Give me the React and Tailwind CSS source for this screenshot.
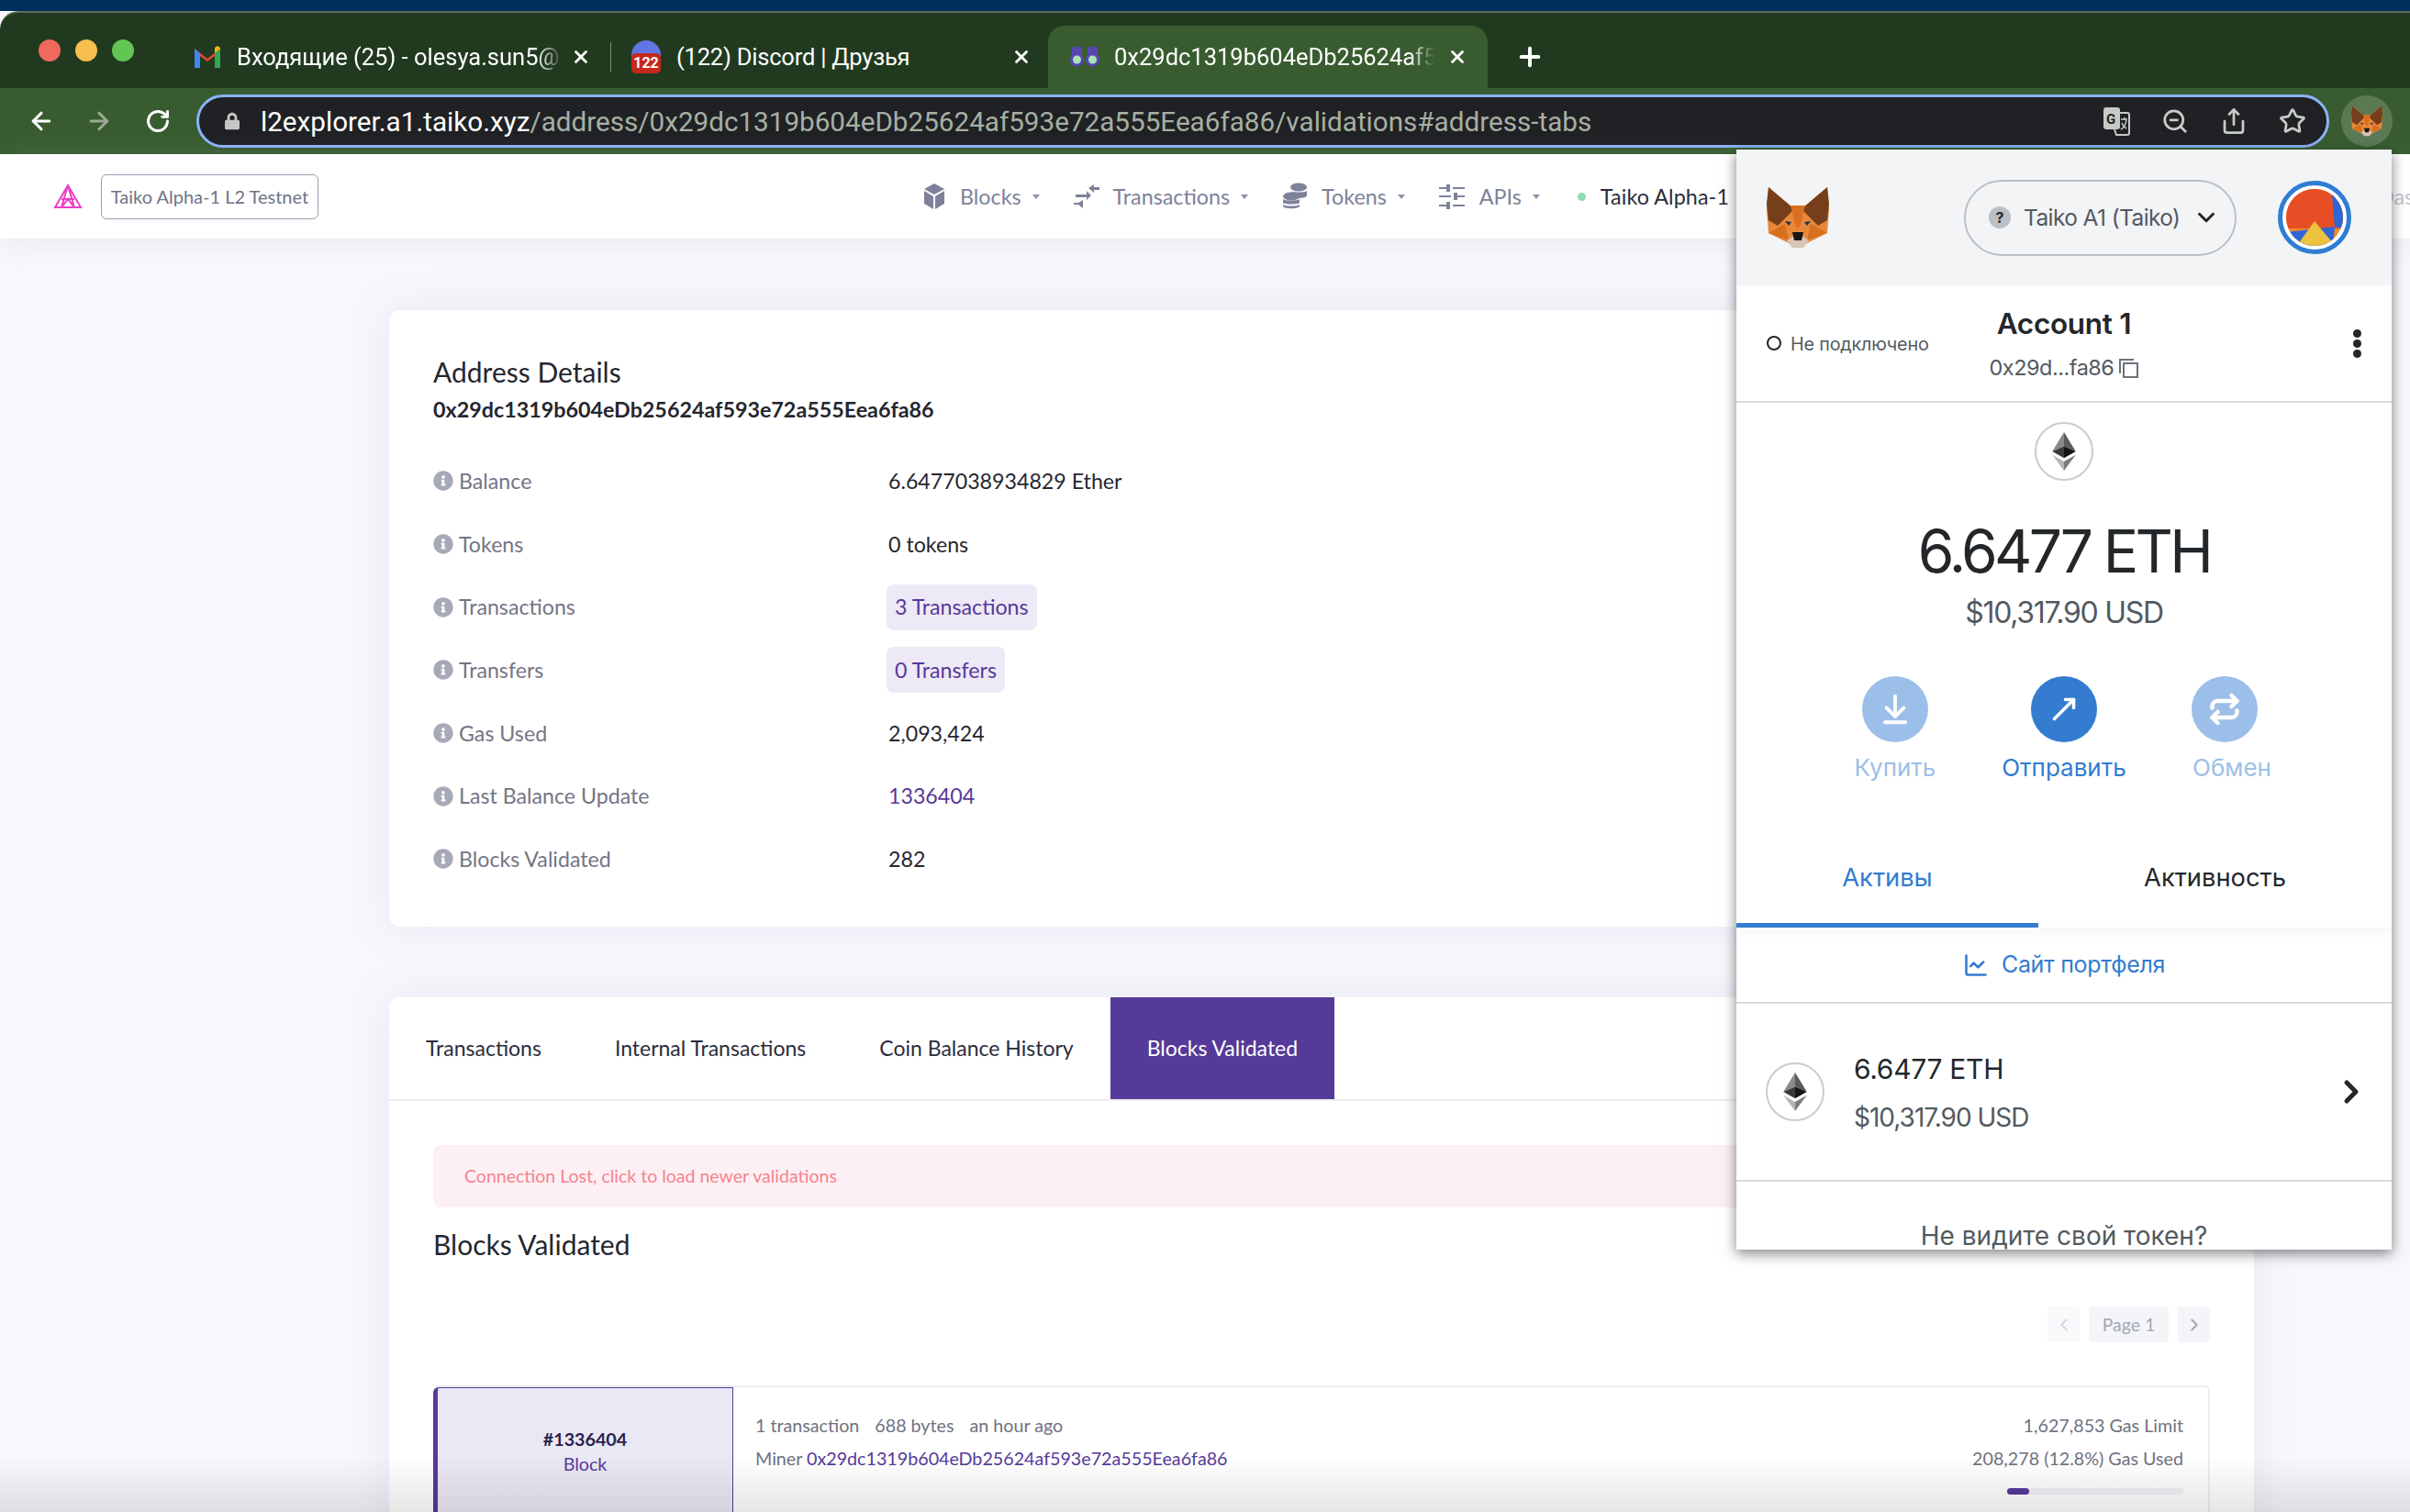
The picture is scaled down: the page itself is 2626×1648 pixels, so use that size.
import React from "react";
import { ArrowLeft, ArrowRight, RotateCw, X, Plus, ZoomOut, Share, Star, ChevronDown, ChevronRight, ChevronLeft, ArrowDownToLine, MoveUpRight, Repeat, ChartLine } from "lucide-react";
import { FaInfoCircle, FaLock } from "react-icons/fa";

const Fox = ({ className }) => (
  <svg viewBox="0 0 68 67" className={className}>
    <polygon points="2,0 26,20 42,20 66,0 68,24 66,50 46,60 34,66 22,60 2,50 0,24" fill="#e8873a" />
    <polygon points="2,0 30,24 12,42 2,36 0,18" fill="#763e1a" />
    <polygon points="66,0 38,24 56,42 66,36 68,18" fill="#763e1a" />
    <polygon points="26,20 42,20 36,44 32,44" fill="#d96f22" />
    <polygon points="2,50 20,40 24,58" fill="#d5701f" />
    <polygon points="66,50 48,40 44,58" fill="#d5701f" />
    <polygon points="22,58 34,50 46,58 40,66 28,66" fill="#d9c4b6" />
    <polygon points="28,49 40,49 38,58 30,58" fill="#161616" />
    <polygon points="20,37 27,38 24,42" fill="#233447" />
    <polygon points="48,37 41,38 44,42" fill="#233447" />
  </svg>
);

const Eth = () => (
  <svg viewBox="0 0 28 46" className="h-[42px] w-[26px]">
    <polygon points="14,0 0,23 14,17" fill="#8a8a8a" />
    <polygon points="14,0 28,23 14,17" fill="#5b5b5b" />
    <polygon points="0,23 14,31 14,17" fill="#3a3a3a" />
    <polygon points="28,23 14,31 14,17" fill="#141414" />
    <polygon points="0,27 14,46 14,35" fill="#b5b5b5" />
    <polygon points="28,27 14,46 14,35" fill="#7d7d7d" />
  </svg>
);

const EthBadge = () => (
  <div className="flex h-[64px] w-[64px] shrink-0 items-center justify-center rounded-full border-2 border-[#c9ccd0] bg-white"><Eth /></div>
);

const NavCaret = () => <span className="ml-[12px] h-0 w-0 border-x-[4px] border-t-[5px] border-x-transparent border-t-[#8f93a8]" />;

const Row = ({ label, children }) => (
  <div className="flex h-[68.7px] items-center">
    <div className="flex w-[496px] items-center">
      <FaInfoCircle className="mr-[6px] h-[22px] w-[22px] text-[#a7a8b8]" />
      <span className="text-[#737585]">{label}</span>
    </div>
    {children}
  </div>
);

const Pill = ({ children }) => (
  <span className="-ml-[2px] flex h-[50px] items-center rounded-[8px] bg-[#ede9f6] px-[9px] text-[#563a99]">{children}</span>
);

const ActionButton = ({ icon, label, faded, width, labelClass = "" }) => (
  <div className={`flex flex-col items-center ${width}`}>
    <div className={`flex h-[72px] w-[72px] items-center justify-center rounded-full ${faded ? "bg-[#9cbfe9]" : "bg-[#337cd0]"}`}>{icon}</div>
    <span className={`mt-[10px] text-[26px] leading-[36px] ${faded ? "text-[#9cbfe9]" : "text-[#337cd0]"} ${labelClass}`}>{label}</span>
  </div>
);

export default function App() {
  return (
    <div className="relative h-[1648px] w-[2626px] overflow-hidden bg-[#f7f7fc] font-['Lato',sans-serif]">
      <div className="h-[12px] bg-[#01305f]" />

      <div className="flex h-[84px] items-end rounded-tl-[20px] border-t-2 border-[#5d6f58] bg-[#213a1f] font-['Roboto',sans-serif] text-[25.5px] text-white">
        <div className="flex h-[68px] w-[211px] shrink-0 items-center pb-[14px] pl-[42px] gap-[16px]">
          <span className="h-[24px] w-[24px] rounded-full bg-[#f0695f]" />
          <span className="h-[24px] w-[24px] rounded-full bg-[#f6bd4f]" />
          <span className="h-[24px] w-[24px] rounded-full bg-[#62c554]" />
        </div>
        <div className="flex h-[68px] w-[454px] shrink-0 items-center">
          <svg viewBox="0 0 30 26" className="h-[26px] w-[30px] shrink-0">
            <path d="M1 25V4l14 11L29 4v21h-6V12l-8 6-8-6v13z" fill="#ea4335" />
            <path d="M1 25V4l6 5v16z" fill="#4285f4" />
            <path d="M29 25V4l-6 5v16z" fill="#34a853" />
            <path d="M23 9l6-5v-1l-3-2-3 2z" fill="#fbbc04" />
          </svg>
          <span className="ml-[17px] w-[356px] whitespace-nowrap [mask-image:linear-gradient(to_right,black_92%,transparent)]">Входящие (25) - olesya.sun5@</span>
          <X className="ml-[8px] h-[22px] w-[22px]" strokeWidth={3} />
        </div>
        <div className="mb-[18px] h-[32px] w-[1px] shrink-0 bg-[#7d8d7a]" />
        <div className="flex h-[68px] w-[476px] shrink-0 items-center pl-[22px]">
          <div className="relative h-[36px] w-[32px] shrink-0 rounded-full bg-[#5f76e4]">
            <span className="absolute bottom-0 left-0 flex h-[22px] w-[32px] items-center justify-center rounded-[5px] bg-[#c5281c] text-[16px] font-bold text-white">122</span>
          </div>
          <span className="ml-[17px] w-[340px] whitespace-nowrap tracking-[-0.2px]">(122) Discord | Друзья</span>
          <X className="ml-[25px] h-[22px] w-[22px]" strokeWidth={3} />
        </div>
        <div className="flex h-[68px] w-[479px] shrink-0 items-center rounded-t-[18px] bg-[#385c30] pl-[24px]">
          <svg viewBox="0 0 32 24" className="h-[24px] w-[32px] shrink-0">
            <rect x="2" y="1" width="11" height="10" rx="3" fill="#5847b5" />
            <rect x="19" y="1" width="11" height="10" rx="3" fill="#5847b5" />
            <circle cx="7.5" cy="15" r="7.5" fill="#5847b5" />
            <circle cx="24.5" cy="15" r="7.5" fill="#5847b5" />
            <circle cx="7.5" cy="15" r="4.5" fill="#a7e3b4" />
            <circle cx="24.5" cy="15" r="4.5" fill="#a7e3b4" />
          </svg>
          <span className="ml-[16px] w-[349px] whitespace-nowrap [mask-image:linear-gradient(to_right,black_92%,transparent)]">0x29dc1319b604eDb25624af5</span>
          <X className="ml-[14px] h-[22px] w-[22px]" strokeWidth={3} />
        </div>
        <Plus className="mb-[18px] ml-[30px] h-[32px] w-[32px]" strokeWidth={3} />
      </div>

      <div className="flex h-[72px] items-center bg-[#385c30] pl-[30px] font-['Roboto',sans-serif]">
        <ArrowLeft className="h-[30px] w-[30px] text-white" strokeWidth={2.5} />
        <ArrowRight className="ml-[33px] h-[30px] w-[30px] text-[#9aaa96]" strokeWidth={2.5} />
        <RotateCw className="ml-[35px] h-[28px] w-[28px] text-white" strokeWidth={2.5} />
        <div className="ml-[28px] flex h-[58px] w-[2324px] items-center rounded-full border-[3px] border-[#8ab4f8] bg-[#202124] pl-[28px] pr-[22px] text-[29.65px]">
          <FaLock className="h-[20px] w-[16px] text-[#c4c7c5]" />
          <span className="ml-[23px] whitespace-nowrap pt-[2px] text-white">l2explorer.a1.taiko.xyz<span className="text-[#a6b0a4]">/address/0x29dc1319b604eDb25624af593e72a555Eea6fa86/validations#address-tabs</span></span>
          <div className="ml-auto flex items-center gap-[34px] text-[#c7cbc6]">
            <svg viewBox="0 0 30 32" className="h-[32px] w-[30px]">
              <rect x="1" y="1" width="18" height="24" rx="3" fill="#c7cbc6" />
              <path d="M19 7h8a2 2 0 0 1 2 2v20a2 2 0 0 1-2 2H15l-2-6" fill="none" stroke="#c7cbc6" strokeWidth="2" />
              <text x="4" y="19" fontSize="15" fontWeight="700" fill="#202124">G</text>
              <path d="M20 14h7M24 12v3M26 15c-1 6-4 9-6 10M21 18c1 3 3 5 5 6" fill="none" stroke="#c7cbc6" strokeWidth="1.5" />
            </svg>
            <ZoomOut className="h-[30px] w-[30px]" strokeWidth={2.2} />
            <Share className="h-[30px] w-[30px]" strokeWidth={2.2} />
            <Star className="h-[30px] w-[30px]" strokeWidth={2.2} />
          </div>
        </div>
        <div className="ml-[13px] flex h-[56px] w-[56px] items-center justify-center rounded-full bg-[#5b7a54]">
          <Fox className="h-[42px] w-[34px]" />
        </div>
      </div>

      <div className="relative flex h-[92px] items-center whitespace-nowrap bg-white text-[23.3px] shadow-[0_2px_30px_rgba(160,160,190,0.18)] [&>*]:shrink-0">
        <svg viewBox="0 0 32 28" className="ml-[58px] h-[28px] w-[32px]" fill="none" stroke="#ec3fc4" strokeWidth="2">
          <path d="M16 2 2 26h28zM16 2l-7 24M16 2l7 24M9 17h14M9 26l7-9 7 9" />
        </svg>
        <div className="ml-[20px] flex h-[49px] w-[237px] items-center justify-center rounded-[6px] border border-[#9a9db0] text-[20px] text-[#6f7487]">Taiko Alpha-1 L2 Testnet</div>

        <svg viewBox="0 0 24 28" className="ml-[659px] h-[28px] w-[24px]" fill="#7d8299"><path d="M12 0 23 6 12 12 1 6zM1 8l10 6v14L1 22zM23 8 13 14v14l10-6z" /></svg>
        <span className="ml-[16px] text-[#7d8299]">Blocks</span>
        <NavCaret />
        <svg viewBox="0 0 28 26" className="ml-[37px] h-[26px] w-[28px]" fill="#7d8299"><path d="M16 4l6-4v3h6v3h-6v3zM2 11h12V7l5 5-5 5v-3H2zM10 17v9l-5-4H0v-2h5z" /></svg>
        <span className="ml-[15px] text-[#7d8299]">Transactions</span>
        <NavCaret />
        <svg viewBox="0 0 28 30" className="ml-[37px] h-[30px] w-[28px]" fill="#7d8299">
          <ellipse cx="18" cy="5" rx="9" ry="4.5" /><path d="M9 9c2 2 16 2 18 0v5c0 2-4 3-9 3z" /><ellipse cx="10" cy="15" rx="9" ry="4.5" /><path d="M1 18c2 2 16 2 18 0v4c-2 2-16 2-18 0zM1 24c2 2 16 2 18 0v2c-2 3-16 3-18 0z" />
        </svg>
        <span className="ml-[15px] text-[#7d8299]">Tokens</span>
        <NavCaret />
        <svg viewBox="0 0 28 28" className="ml-[37px] h-[28px] w-[28px]" fill="#7d8299"><path d="M0 4h8V1h4v8H8V6H0zM15 4h13v2H15zM0 13h13v2H0zM16 10h4v3h8v2h-8v3h-4zM0 23h8v-3h4v8H8v-3H0zM15 23h13v2H15z" /></svg>
        <span className="ml-[16px] text-[#7d8299]">APIs</span>
        <NavCaret />
        <span className="ml-[41px] h-[9px] w-[9px] rounded-full bg-[#8fdcae]" />
        <span className="ml-[16px] tracking-[0.1px] text-[#2c2c3a]">Taiko Alpha-1</span>
        <span className="ml-[707px] text-[#c4c6d2]">Dashboard</span>
      </div>

      <div className="flex flex-col pl-[424px] pt-[78px] text-[23.2px]">
        <div className="h-[672px] w-[2032px] rounded-[12px] bg-white pl-[48px] pt-[47px] shadow-[0_0_40px_rgba(190,187,220,0.25)]">
          <h1 className="text-[30px] leading-[40px] text-[#26262f]">Address Details</h1>
          <p className="mt-[6px] text-[23.3px] font-bold leading-[30px] text-[#26262f]">0x29dc1319b604eDb25624af593e72a555Eea6fa86</p>
          <div className="mt-[29px] text-[#26262f]">
            <Row label="Balance">6.6477038934829 Ether</Row>
            <Row label="Tokens">0 tokens</Row>
            <Row label="Transactions"><Pill>3 Transactions</Pill></Row>
            <Row label="Transfers"><Pill>0 Transfers</Pill></Row>
            <Row label="Gas Used">2,093,424</Row>
            <Row label="Last Balance Update"><span className="text-[#563a99]">1336404</span></Row>
            <Row label="Blocks Validated">282</Row>
          </div>
        </div>

        <div className="mt-[77px] h-[600px] w-[2032px] rounded-t-[12px] bg-white shadow-[0_0_40px_rgba(190,187,220,0.25)]">
          <div className="flex h-[113px] border-b-2 border-[#eeeef2] text-[23px] text-[#2c2c3a]">
            <span className="flex items-center px-[40px]">Transactions</span>
            <span className="flex items-center px-[40px]">Internal Transactions</span>
            <span className="flex items-center px-[40px]">Coin Balance History</span>
            <span className="flex items-center bg-[#563a99] px-[40px] text-white">Blocks Validated</span>
          </div>
          <div className="px-[48px]">
            <div className="mt-[48px] flex h-[68px] items-center rounded-[8px] bg-[#fdf0f4] pl-[34px] text-[19.5px] text-[#f5838f]">Connection Lost, click to load newer validations</div>
            <h2 className="mt-[20px] text-[30px] leading-[40px] text-[#26262f]">Blocks Validated</h2>
            <div className="mt-[48px] flex h-[39px] justify-end gap-[10px] text-[19.5px]">
              <span className="flex w-[35px] items-center justify-center rounded-[4px] bg-[#f9f9fc] text-[#d4d6e0]"><ChevronLeft className="h-[22px] w-[22px]" /></span>
              <span className="flex w-[87px] items-center justify-center rounded-[4px] bg-[#f4f5f9] text-[#a4a7b6]">Page 1</span>
              <span className="flex w-[35px] items-center justify-center rounded-[4px] bg-[#f4f5f9] text-[#a4a7b6]"><ChevronRight className="h-[22px] w-[22px]" /></span>
            </div>
            <div className="mt-[47px] flex h-[200px] rounded-[6px] border-2 border-l-0 border-[#ececf1] text-[19.7px] text-[#6f7282]">
              <div className="flex w-[327px] shrink-0 flex-col items-center rounded-l-[6px] border-x-[5px] border-t border-[#563a99] border-r-[1px] bg-[#ebe8f5] pt-[42px]">
                <span className="font-bold leading-[28px] text-[#2a1f4d]">#1336404</span>
                <span className="leading-[26px] text-[#563a99]">Block</span>
              </div>
              <div className="pl-[24px] pt-[24px]">
                <div className="flex h-[36px] items-center gap-[17px] whitespace-nowrap">
                  <span>1 transaction</span><span>688 bytes</span><span>an hour ago</span>
                </div>
                <div className="flex h-[36px] items-center whitespace-nowrap">Miner&nbsp;<span className="text-[#563a99]">0x29dc1319b604eDb25624af593e72a555Eea6fa86</span></div>
              </div>
              <div className="ml-auto flex flex-col items-end pr-[27px] pt-[24px]">
                <div className="flex h-[36px] items-center">1,627,853 Gas Limit</div>
                <div className="flex h-[36px] items-center">208,278 (12.8%) Gas Used</div>
                <div className="mt-[14px] h-[7px] w-[192px] rounded-full bg-[#f0f0f6]">
                  <div className="h-[7px] w-[24px] rounded-full bg-[#563a99]" />
                </div>
              </div>
            </div>
          </div>
        </div>
      </div>

      <div className="pointer-events-none absolute bottom-0 left-0 h-[60px] w-full bg-linear-to-b from-transparent to-black/10" />

      <div className="absolute left-[1892px] top-[163px] flex h-[1199px] w-[714px] flex-col overflow-hidden bg-white font-['Inter',sans-serif] text-[#24272a] shadow-[0_4px_14px_rgba(0,0,0,0.5)]">
        <div className="flex h-[148px] shrink-0 items-center bg-[#f2f4f6]">
          <Fox className="ml-[33px] h-[67px] w-[68px]" />
          <div className="ml-[147px] flex h-[83px] w-[297px] items-center rounded-full border-2 border-[#bbc0c5] pl-[25px]">
            <span className="flex h-[24px] w-[24px] items-center justify-center rounded-full bg-[#bbc0c5] text-[16px] font-bold text-[#24272a]">?</span>
            <span className="ml-[14px] whitespace-nowrap text-[24.5px] tracking-[-0.6px] text-[#535a61]">Taiko A1 (Taiko)</span>
            <ChevronDown className="ml-[14px] h-[30px] w-[30px]" strokeWidth={2.4} />
          </div>
          <svg viewBox="0 0 80 80" className="ml-[45px] h-[80px] w-[80px]">
            <circle cx="40" cy="40" r="37.5" fill="#fff" stroke="#2f7dd3" strokeWidth="5" />
            <clipPath id="av"><circle cx="40" cy="40" r="31" /></clipPath>
            <g clipPath="url(#av)">
              <rect width="80" height="80" fill="#f18a2a" />
              <rect y="0" width="80" height="52" fill="#e84e25" />
              <polygon points="58,4 80,4 80,54 62,50" fill="#2f66d6" />
              <polygon points="8,56 62,50 60,75 20,75" fill="#2f66d6" />
              <polygon points="40,44 70,80 14,80" fill="#ecc23f" />
            </g>
          </svg>
        </div>

        <div className="flex h-[128px] shrink-0 items-center border-b-2 border-[#d6d9dc]">
          <span className="ml-[33px] h-[16px] w-[16px] rounded-full border-2 border-[#24272a]" />
          <span className="ml-[10px] w-[160px] whitespace-nowrap pt-[3px] text-[19.8px] tracking-[-0.2px] text-[#535a61]">Не подключено</span>
          <div className="ml-[23px] flex w-[230px] flex-col items-center pt-[3px]">
            <span className="text-[31.5px] font-semibold leading-[40px] tracking-[-0.3px]">Account 1</span>
            <div className="mt-[10px] flex items-center whitespace-nowrap text-[23.5px] tracking-[-0.5px] text-[#535a61]">
              0x29d...fa86
              <svg viewBox="0 0 22 22" className="ml-[5px] h-[22px] w-[22px]" fill="none" stroke="#6a737d" strokeWidth="2"><path d="M2 17V2h15" /><rect x="6" y="6" width="15" height="15" /></svg>
            </div>
          </div>
          <div className="ml-[200px] flex flex-col gap-[2px]">
            <span className="h-[9px] w-[9px] rounded-full bg-[#24272a]" />
            <span className="h-[9px] w-[9px] rounded-full bg-[#24272a]" />
            <span className="h-[9px] w-[9px] rounded-full bg-[#24272a]" />
          </div>
        </div>

        <div className="flex shrink-0 flex-col items-center">
          <div className="mt-[21px]"><EthBadge /></div>
          <div className="mt-[41px] text-[64px] leading-[72px] tracking-[-3.6px]">6.6477 ETH</div>
          <div className="mt-[11px] text-[32px] leading-[40px] tracking-[-1.3px] text-[#535a61]">$10,317.90 USD</div>
        </div>

        <div className="mt-[49px] flex shrink-0 pl-[110px]">
          <ActionButton width="w-[126px]" faded label="Купить" icon={<ArrowDownToLine className="h-[38px] w-[38px] text-white" strokeWidth={2.4} />} />
          <ActionButton width="w-[184px] ml-[29px]" label="Отправить" icon={<MoveUpRight className="h-[36px] w-[36px] text-white" strokeWidth={2.4} />} />
          <ActionButton width="w-[120px] ml-[23px]" faded labelClass="ml-[16px]" label="Обмен" icon={<Repeat className="h-[36px] w-[36px] text-white" strokeWidth={3} />} />
        </div>

        <div className="mt-[51px] flex h-[105px] shrink-0 text-[27.3px] shadow-[0_6px_10px_rgba(0,0,0,0.04)]">
          <div className="flex w-[329px] items-center justify-center border-b-[5px] border-[#337cd0] pt-[2px] text-[#337cd0]">Активы</div>
          <div className="flex flex-1 items-center justify-center pb-[3px]">Активность</div>
        </div>

        <div className="flex h-[83px] shrink-0 items-center justify-center gap-[14px] border-b-2 border-[#d6d9dc] text-[25px] tracking-[-0.3px] text-[#337cd0]">
          <ChartLine className="h-[28px] w-[28px]" strokeWidth={2.2} />
          Сайт портфеля
        </div>

        <div className="flex h-[194px] shrink-0 items-center border-b-2 border-[#d6d9dc]">
          <div className="ml-[32px]"><EthBadge /></div>
          <div className="ml-[32px] flex flex-col pt-[2px]">
            <span className="text-[30px] leading-[40px] tracking-[-0.3px]">6.6477 ETH</span>
            <span className="mt-[14px] text-[28px] leading-[38px] tracking-[-1px] text-[#535a61]">$10,317.90 USD</span>
          </div>
          <ChevronRight className="ml-auto mr-[24px] h-[40px] w-[40px]" strokeWidth={3} />
        </div>

        <div className="mt-[40px] whitespace-nowrap text-center text-[28px] leading-[38px] text-[#535a61]">Не видите свой токен?</div>
      </div>
    </div>
  );
}
